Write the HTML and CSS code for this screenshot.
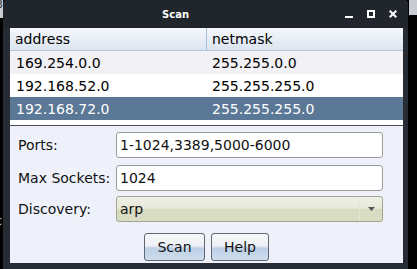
FILE: index.html
```html
<!DOCTYPE html>
<html lang="en">

<head>
    <meta charset="UTF-8">
    <title>Scan</title>
    <link rel="stylesheet" href="styles.css">
</head>

<body>
    <div class="desk">
        <div class="edgeLeft">
            <div class="peekTop">3</div>
            <div class="peekMid">c</div>
        </div>
        <div class="window">
            <div class="titlebar">
                <span class="title">Scan</span>
                <div class="controls">
                    <svg width="8" height="8" viewBox="0 0 8 8"><rect x="0" y="6" width="8" height="2" fill="#fff"/></svg>
                    <svg width="8" height="8" viewBox="0 0 8 8"><rect x="1" y="1" width="6" height="6" fill="none" stroke="#fff" stroke-width="2"/></svg>
                    <svg width="8" height="8" viewBox="0 0 8 8"><path d="M0.7 0.7 L7.3 7.3 M7.3 0.7 L0.7 7.3" stroke="#fff" stroke-width="2"/></svg>
                </div>
            </div>
            <div class="client">
                <div class="table">
                    <div class="thead">
                        <div class="cell first">address</div>
                        <div class="cell">netmask</div>
                    </div>
                    <div class="row odd">
                        <div class="cell first">169.254.0.0</div>
                        <div class="cell">255.255.0.0</div>
                    </div>
                    <div class="row">
                        <div class="cell first">192.168.52.0</div>
                        <div class="cell">255.255.255.0</div>
                    </div>
                    <div class="row selected">
                        <div class="cell first">192.168.72.0</div>
                        <div class="cell">255.255.255.0</div>
                    </div>
                    <div class="filler"></div>
                </div>
                <div class="form">
                    <div class="field ports">
                        <label>Ports:</label>
                        <div class="input">1-1024,3389,5000-6000</div>
                    </div>
                    <div class="field sockets">
                        <label>Max Sockets:</label>
                        <div class="input">1024</div>
                    </div>
                    <div class="field discovery">
                        <label>Discovery:</label>
                        <div class="combo">
                            <span class="comboText">arp</span>
                            <span class="comboArrow">
                                <svg width="7" height="4" viewBox="0 0 7 4"><path d="M0 0 L7 0 L3.5 4 Z" fill="#55585a"/></svg>
                            </span>
                        </div>
                    </div>
                    <div class="buttons">
                        <button class="btn scan">Scan</button>
                        <button class="btn help">Help</button>
                    </div>
                </div>
            </div>
        </div>
        <div class="edgeRight">
            <div class="peekRight"></div>
        </div>
    </div>
</body>

</html>
```

FILE: styles.css
```css
html, body {
    margin: 0;
    padding: 0;
    background-color: black;
    width: 417px;
    height: 269px;
    overflow: hidden;
    font-family: "DejaVu Sans", sans-serif;
    font-size: 14px;
}
.desk {
    display: flex;
    height: 269px;
}
.edgeLeft {
    width: 3px;
    display: flex;
    flex-direction: column;
    overflow: hidden;
}
.peekTop {
    height: 18px;
    background: #c8ccd2;
    color: #333;
    font-size: 11px;
    line-height: 10px;
    text-indent: -4px;
}
.peekMid {
    margin-top: 197px;
    color: #c0c0c0;
    font-size: 13px;
    line-height: 12px;
    text-indent: -5px;
}
.window {
    width: 405px;
    background: #272b33;
    border-radius: 4px 4px 0 0;
    display: flex;
    flex-direction: column;
}
.titlebar {
    height: 28px;
    background: #21252c;
    border-radius: 4px 4px 0 0;
    display: flex;
    align-items: center;
    padding: 0 11px 0 159px;
}
.title {
    color: #ffffff;
    font-weight: bold;
    font-size: 10px;
}
.controls {
    margin-left: auto;
    display: flex;
    gap: 14px;
}
.client {
    margin: 0 5px 0 7px;
    height: 235px;
    display: flex;
    flex-direction: column;
    background: #eef1f9;
}
.table {
    background: white;
    display: flex;
    flex-direction: column;
    border-bottom: 1px solid #4c4f55;
}
.thead, .row {
    display: flex;
}
.thead {
    height: 22px;
    background: linear-gradient(#f5f8fc, #dbe4f0);
    border-bottom: 1px solid #b1c7de;
}
.row {
    height: 23px;
}
.row.odd {
    background: #f2f2f6;
}
.row.selected {
    background: #5b7896;
    color: white;
}
.cell {
    flex: 1;
    display: flex;
    align-items: center;
    padding-left: 5px;
    color: inherit;
}
.cell.first {
    flex: 0 0 191px;
}
.thead .cell.first {
    border-right: 1px solid #a9c0da;
    padding-left: 5px;
}
.row .cell.first {
    flex-basis: 190px;
    padding-left: 6px;
    padding-right: 1px;
}
.filler {
    height: 5px;
}
.form {
    flex: 1;
    display: flex;
    flex-direction: column;
    padding: 6px 20px 0 8px;
}
.field {
    display: flex;
    align-items: center;
    height: 26px;
}
.field label {
    width: 98px;
    color: #111;
}
.sockets {
    margin-top: 7px;
}
.discovery {
    margin-top: 5px;
}
.input {
    flex: 1;
    height: 24px;
    box-sizing: border-box;
    height: 26px;
    background: white;
    border: 1px solid #9c9c9c;
    border-radius: 3px;
    padding-left: 3px;
    display: flex;
    align-items: center;
    color: #111;
}
.combo {
    flex: 1;
    height: 26px;
    box-sizing: border-box;
    border: 1px solid #a3a58f;
    border-radius: 3px;
    background: linear-gradient(#eff0e6 0%, #e6e8d7 50%, #d7dbc0 52%, #d9ddc4 100%);
    display: flex;
    align-items: center;
}
.comboText {
    flex: 1;
    padding-left: 3px;
    color: #111;
}
.comboArrow {
    width: 22px;
    height: 24px;
    display: flex;
    align-items: center;
    justify-content: center;
    border-left: 1px solid #e4e6d8;
}
.buttons {
    margin-top: 11px;
    display: flex;
    justify-content: center;
    gap: 6px;
    padding-left: 12px;
}
.btn {
    height: 28px;
    border: 1px solid #5f6873;
    border-radius: 3px;
    background: linear-gradient(#f6f7f9 0%, #eef1f5 45%, #bdd0e6 55%, #cfdcec 100%);
    font-family: "DejaVu Sans", sans-serif;
    font-size: 14px;
    color: #111;
    padding: 0;
}
.btn.scan {
    width: 61px;
}
.btn.help {
    width: 58px;
}
.edgeRight {
    flex: 1;
    padding-left: 1px;
}
.peekRight {
    height: 15px;
    background: #c8ccd2;
}
```
